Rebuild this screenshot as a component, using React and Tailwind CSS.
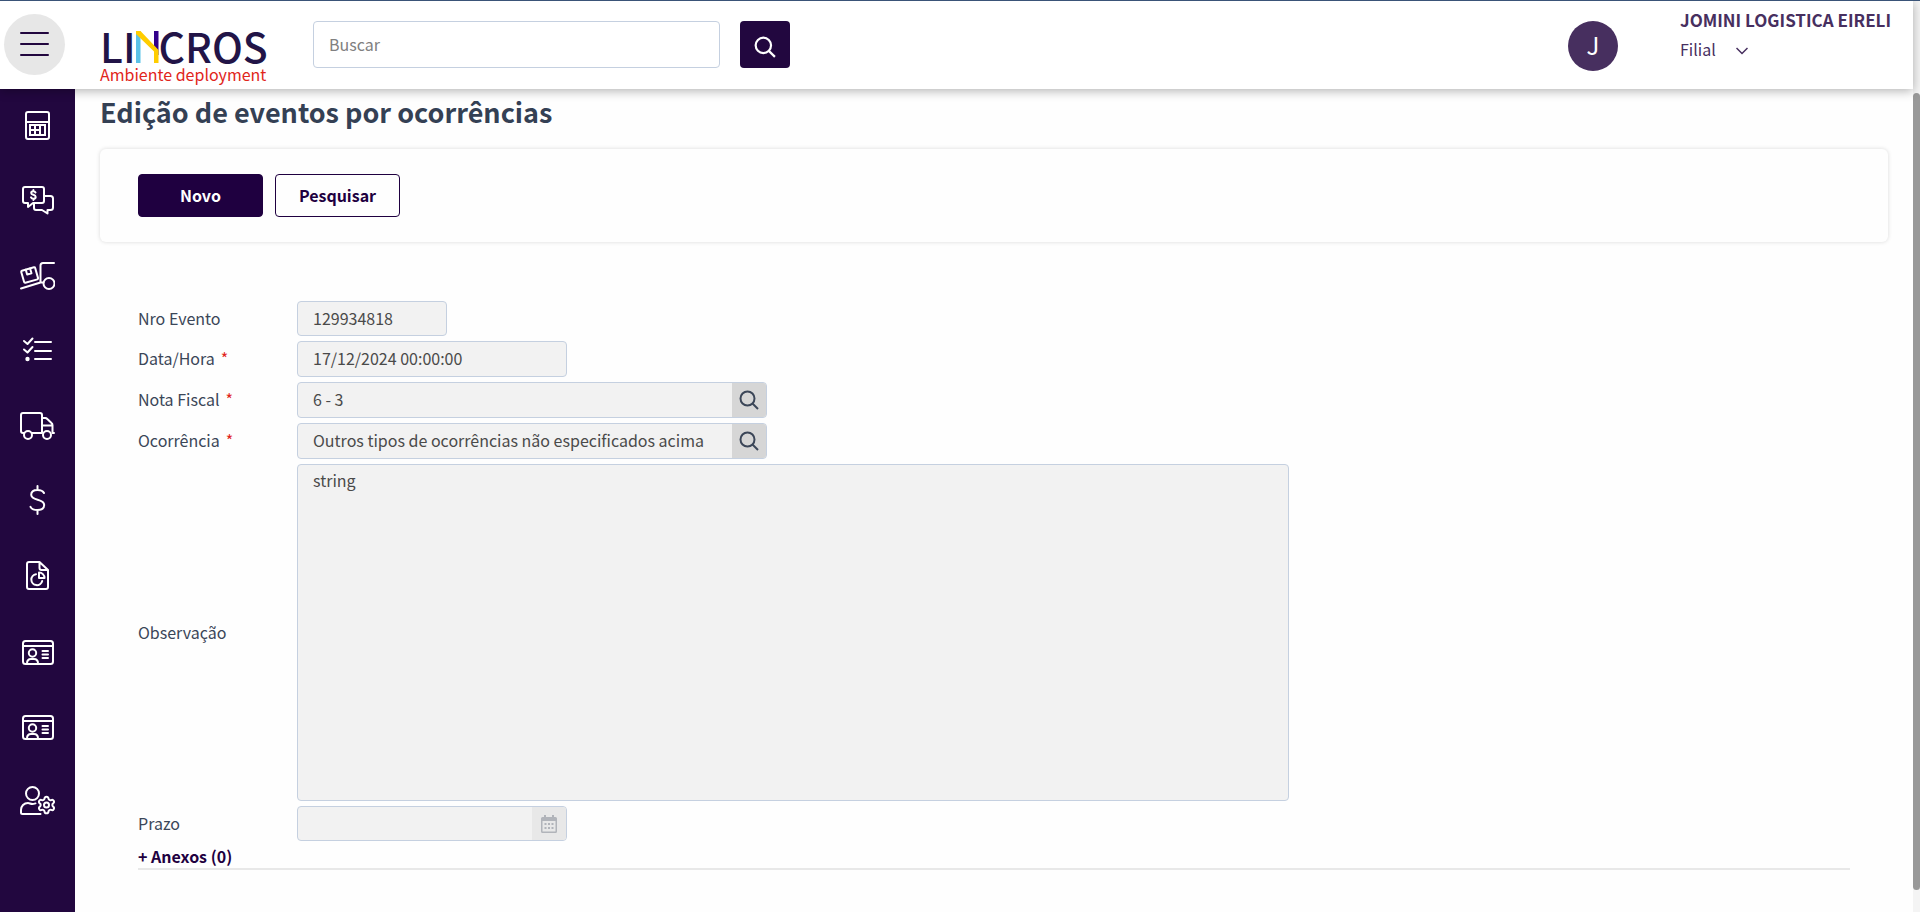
import React from "react";
import { Settings } from "lucide-react";

function NavIcon({ children }) {
  return (
    <svg
      width="36"
      height="36"
      viewBox="0 0 36 36"
      fill="none"
      stroke="currentColor"
      strokeWidth="2"
      strokeLinecap="round"
      strokeLinejoin="round"
      aria-hidden="true"
    >
      {children}
    </svg>
  );
}

const CalculatorIcon = () => (
  <NavIcon>
    <rect x="7" y="5" width="23" height="27" rx="2" />
    <path d="M7 15h23" />
    <path d="M10 17h17v12H10z" strokeWidth="0" fill="currentColor" />
    <path
      d="M12 19h3v3h-3zM17 19h3v3h-3zM12 24h3v3h-3zM17 24h3v3h-3zM22 19h3v8h-3z"
      strokeWidth="0"
      fill="#22073f"
    />
  </NavIcon>
);

const ChatMoneyIcon = () => (
  <NavIcon>
    <path d="M6 5h17a2 2 0 0 1 2 2v12a2 2 0 0 1-2 2h-9l-5 4v-4H6a2 2 0 0 1-2-2V7a2 2 0 0 1 2-2z" />
    <path d="M25 14h6.500a2.500 2.500 0 0 1 2.500 2.500v9a2.500 2.500 0 0 1-2.500 2.500h-3v3.500L23 28h-6a2 2 0 0 1-2-2v-4" />
    <path d="M16.500 10.500c-.5-1-1.200-1.300-2.200-1.300-1.300 0-2.100.7-2.100 1.700 0 2.400 4.500 1.400 4.500 4 0 1.100-.9 1.800-2.300 1.800-1.200 0-2-.5-2.400-1.400M14.400 8v1M14.400 17v1" />
  </NavIcon>
);

const TrolleyIcon = () => (
  <NavIcon>
    <path d="M35 6H24a2.500 2.500 0 0 0-2.500 2.500v17M2 31.500l19.500-6h3" />
    <circle cx="30" cy="26.500" r="5.500" />
    <g transform="rotate(-16 10 18.500)">
      <rect x="3.500" y="12" width="14.500" height="12.500" rx="1" />
      <path d="M8.500 12v5H13v-5" />
    </g>
  </NavIcon>
);

const ChecklistIcon = () => (
  <NavIcon>
    <path d="M5 9l3.500 3 5-5.500M5 17.500l3.500 3 5-5.500M16 10h16M16 19h16M16 27h16" />
    <circle cx="8.500" cy="27" r="2.200" strokeWidth="0" fill="currentColor" />
  </NavIcon>
);

const TruckIcon = () => (
  <NavIcon>
    <path d="M5 26H4a2 2 0 0 1-2-2V8a2 2 0 0 1 2-2h17a2 2 0 0 1 2 2v18H13M23 11h3a3 3 0 0 1 2.300 1L32.500 16a3 3 0 0 1 1 2.200V26H35M23 18.500h10" />
    <circle cx="9" cy="28" r="4" />
    <circle cx="28" cy="28" r="4" fill="#22073f" />
  </NavIcon>
);

const DollarIcon = () => (
  <NavIcon>
    <path d="M18.500 4v4M18.500 28v4M25 11c-1-2-3.200-3-6.500-3-3.800 0-6.300 1.800-6.300 4.800 0 6.500 13 3.400 13 10.200 0 3.200-2.700 5-6.700 5-3.500 0-6-1-7-3.200" />
  </NavIcon>
);

const ReportIcon = () => (
  <NavIcon>
    <path d="M20.500 5H10a2 2 0 0 0-2 2v23a2 2 0 0 0 2 2h17a2 2 0 0 0 2-2V13zM20.500 5v6a2 2 0 0 0 2 2H29" />
    <path d="M17 17.200a5.500 5.500 0 1 0 6.200 6.700" />
    <path d="M20 15.500v5.500h5.500a5.500 5.500 0 0 0-5.500-5.500z" />
  </NavIcon>
);

const IdCardIcon = () => (
  <NavIcon>
    <rect x="4" y="9" width="30" height="23" rx="2.500" />
    <path d="M4 14h30M23.500 19h5.500M23.500 22.500h5.500M23.500 26h5.500" />
    <circle cx="13.500" cy="21" r="3.700" />
    <path d="M8 31.500c0-3 1.500-4.500 4-4.500h3c2.500 0 4 1.500 4 4.500" />
  </NavIcon>
);

const UserSettingsIcon = () => (
  <NavIcon>
    <circle cx="13.500" cy="11.500" r="6.500" />
    <path d="M21.500 32H3.500A1.500 1.500 0 0 1 2 30.500V28c0-4 3-7 7-7 1.500 0 2.500 1 4.500 1 1 0 2-.3 3-.6" />
    <Settings x="17.500" y="13" width="20" height="20" strokeWidth={2.4} />
  </NavIcon>
);

const navItems = [
  ["Cálculo", CalculatorIcon],
  ["Negociações", ChatMoneyIcon],
  ["Coletas", TrolleyIcon],
  ["Tarefas", ChecklistIcon],
  ["Transporte", TruckIcon],
  ["Financeiro", DollarIcon],
  ["Relatórios", ReportIcon],
  ["Cadastros", IdCardIcon],
  ["Pessoas", IdCardIcon],
  ["Configurações", UserSettingsIcon],
];

function SearchGlyph({ size = 20 }) {
  return (
    <svg width={size} height={size} viewBox="0 0 20 20" fill="none" stroke="currentColor" strokeWidth="2" aria-hidden="true">
      <circle cx="8.500" cy="8.500" r="7" />
      <path d="M13.500 13.500l5.500 5.500" />
    </svg>
  );
}

function CalendarGlyph() {
  return (
    <svg width="16" height="18" viewBox="0 0 16 18" aria-hidden="true">
      <path d="M3 0h2v2h6V0h2v2h1.500A1.500 1.500 0 0 1 16 3.500v13a1.500 1.500 0 0 1-1.500 1.500h-13A1.500 1.500 0 0 1 0 16.500v-13A1.500 1.500 0 0 1 1.500 2H3z" fill="#b1b4ba" />
      <path d="M1.500 6h13v10.500h-13z" fill="#e8e8e8" />
      <path d="M3.500 8h2v2h-2zM7 8h2v2H7zM10.500 8h2v2h-2zM3.500 12h2v2h-2zM7 12h2v2H7zM10.500 12h2v2h-2z" fill="#b1b4ba" />
    </svg>
  );
}

function Logo() {
  return (
    <div className="flex h-8 items-center text-[41px] leading-8 font-medium text-[#221447]">
      <span className="pb-1">LI</span>
      <svg width="23" height="32" viewBox="0 0 23 32" role="img" aria-label="N">
        <path d="M0 0h4.500v32H0z" fill="#5bc2e7" />
        <path d="M18 0h4.500v24H18z" fill="#32008a" />
        <path d="M0 0h4.500L22.500 19v13H18V20.500L0 3z" fill="#ffcd00" />
      </svg>
      <span className="pb-1">CROS</span>
    </div>
  );
}

function Header() {
  return (
    <header className="relative z-10 flex h-[88px] shrink-0 items-start bg-white pr-[25px] pl-1 shadow-[0_2px_10px_rgba(0,0,0,0.3)]">
      <button
        type="button"
        aria-label="Menu"
        className="mt-[13px] flex size-[61px] shrink-0 flex-col items-center justify-center gap-[9px] rounded-full bg-[#e7e7e7] pb-0.5"
      >
        <span className="h-0.5 w-[29px] rounded-full bg-[#22073f]" />
        <span className="h-0.5 w-[29px] rounded-full bg-[#22073f]" />
        <span className="h-0.5 w-[29px] rounded-full bg-[#22073f]" />
      </button>
      <div className="mt-[30px] ml-[35px] w-[213px] shrink-0">
        <Logo />
        <p className="text-base leading-[22px] text-[#e1251b]">Ambiente deployment</p>
      </div>
      <form className="mt-5 flex gap-5" onSubmit={(e) => e.preventDefault()}>
        <input
          type="search"
          aria-label="Buscar"
          placeholder="Buscar"
          className="h-[47px] w-[407px] rounded-[4px] border border-[#c5d0e0] px-[15px] pb-0.5 text-base text-[#4a4a4a] outline-none placeholder:text-[#808080]"
        />
        <button type="submit" aria-label="Pesquisar" className="flex h-[47px] w-[50px] items-center justify-center rounded-[4px] bg-[#22073f] pt-1 text-white">
          <SearchGlyph size={22} />
        </button>
      </form>
      <div className="ml-auto flex items-start gap-[62px] text-[#472f5f]">
        <div className="mt-5 flex size-[50px] items-center justify-center rounded-full bg-[#472f5f] pb-0.5 text-2xl leading-6 text-white">J</div>
        <div className="w-[208px] pt-[7px]">
          <p className="text-[17px] leading-6 font-bold whitespace-nowrap">JOMINI LOGISTICA EIRELI</p>
          <div className="relative mt-[5px] w-[70px]">
            <select aria-label="Filial" className="w-full appearance-none bg-transparent text-base leading-6 outline-none">
              <option>Filial</option>
            </select>
            <svg className="pointer-events-none absolute right-0.5 bottom-1" width="12" height="12" viewBox="0 0 12 12" fill="none" stroke="currentColor" strokeWidth="1.5" aria-hidden="true">
              <path d="M.5 3L6 8.500 11.500 3" />
            </svg>
          </div>
        </div>
      </div>
    </header>
  );
}

function Label({ htmlFor, required, children }) {
  return (
    <label htmlFor={htmlFor} className="pb-0.5 text-base leading-6 text-[#3b4658]">
      {children}
      {required && <span className="ml-1.5 text-[#e1251b]">*</span>}
    </label>
  );
}

const fieldClass = "rounded-[4px] border border-[#c5d0e0] bg-[#f2f2f2] px-[15px] pb-0.5 text-base text-[#4a4a4a] outline-none";

function LookupField({ id, value, label }) {
  return (
    <div className="flex h-9 w-[470px] overflow-hidden rounded-[4px] border border-[#c5d0e0] bg-[#f2f2f2]">
      <input id={id} type="text" readOnly defaultValue={value} className="min-w-0 flex-1 px-[15px] pb-0.5 text-base text-[#4a4a4a] outline-none" />
      <button type="button" aria-label={label} className="flex w-[34px] items-center justify-center bg-[#d6d6d6] text-[#3b4658]">
        <SearchGlyph />
      </button>
    </div>
  );
}

export default function App() {
  return (
    <div className="flex h-screen flex-col overflow-hidden border-t border-[#3a5478] bg-[#fefefe] font-['Noto_Sans_CJK_SC','Source_Sans_Pro',sans-serif]">
      <div className="flex min-h-0 flex-1">
        <div className="flex min-w-0 flex-1 flex-col">
          <Header />
          <div className="flex min-h-0 flex-1">
            <nav className="flex w-[75px] shrink-0 flex-col bg-[#22073f] text-white">
              {navItems.map(([name, Icon]) => (
                <a key={name} href="#" aria-label={name} className="flex h-[75px] items-center justify-center pr-px pb-[3px]">
                  <Icon />
                </a>
              ))}
            </nav>
            <main className="min-w-0 flex-1 px-[25px]">
              <h1 className="h-12 text-[27px] leading-[46px] font-bold text-[#344054]">Edição de eventos por ocorrências</h1>
              <section className="mt-3 flex gap-3 rounded-md px-[38px] py-[25px] shadow-[0_0_4px_rgba(0,0,0,0.15)]">
                <button type="button" className="h-[43px] w-[125px] rounded-[4px] border border-[#1f0040] bg-[#1f0040] pb-0.5 text-base font-bold text-white">
                  Novo
                </button>
                <button type="button" className="h-[43px] w-[125px] rounded-[4px] border border-[#1f0040] pb-0.5 text-base font-bold text-[#1f0040]">
                  Pesquisar
                </button>
              </section>
              <form className="mt-6 px-[38px] pt-[35px]" onSubmit={(e) => e.preventDefault()}>
                <div className="grid grid-cols-[159px_1fr] items-center gap-y-[5px]">
                  <Label htmlFor="evento">Nro Evento</Label>
                  <input id="evento" type="text" readOnly defaultValue="129934818" className={`h-[35px] w-[150px] ${fieldClass}`} />
                  <Label htmlFor="data" required>Data/Hora</Label>
                  <input id="data" type="text" readOnly defaultValue="17/12/2024 00:00:00" className={`h-9 w-[270px] ${fieldClass}`} />
                  <Label htmlFor="nota" required>Nota Fiscal</Label>
                  <LookupField id="nota" value="6 - 3" label="Buscar nota fiscal" />
                  <Label htmlFor="ocorrencia" required>Ocorrência</Label>
                  <LookupField id="ocorrencia" value="Outros tipos de ocorrências não especificados acima" label="Buscar ocorrência" />
                  <Label htmlFor="observacao">Observação</Label>
                  <textarea id="observacao" readOnly defaultValue="string" className={`h-[337px] w-full max-w-[992px] resize-none pt-[3px] leading-6 ${fieldClass}`} />
                  <Label htmlFor="prazo">Prazo</Label>
                  <div className="flex h-[35px] w-[270px] overflow-hidden rounded-[4px] border border-[#c5d0e0] bg-[#f2f2f2]">
                    <input id="prazo" type="text" readOnly className="min-w-0 flex-1 px-[15px] text-base outline-none" />
                    <button type="button" disabled aria-label="Abrir calendário" className="flex w-[34px] items-center justify-center bg-[#e8e8e8]">
                      <CalendarGlyph />
                    </button>
                  </div>
                </div>
                <div className="mt-1 border-b-2 border-[#e8e8e8] pb-px">
                  <a href="#" className="block text-base leading-[22px] font-bold text-[#1f0040]">+ Anexos (0)</a>
                </div>
              </form>
            </main>
          </div>
        </div>
        <div className="w-[7px] shrink-0 bg-[#f4f4f4] pt-[92px] pb-[22px]" aria-hidden="true">
          <div className="h-full rounded-full bg-[#999999]" />
        </div>
      </div>
    </div>
  );
}
